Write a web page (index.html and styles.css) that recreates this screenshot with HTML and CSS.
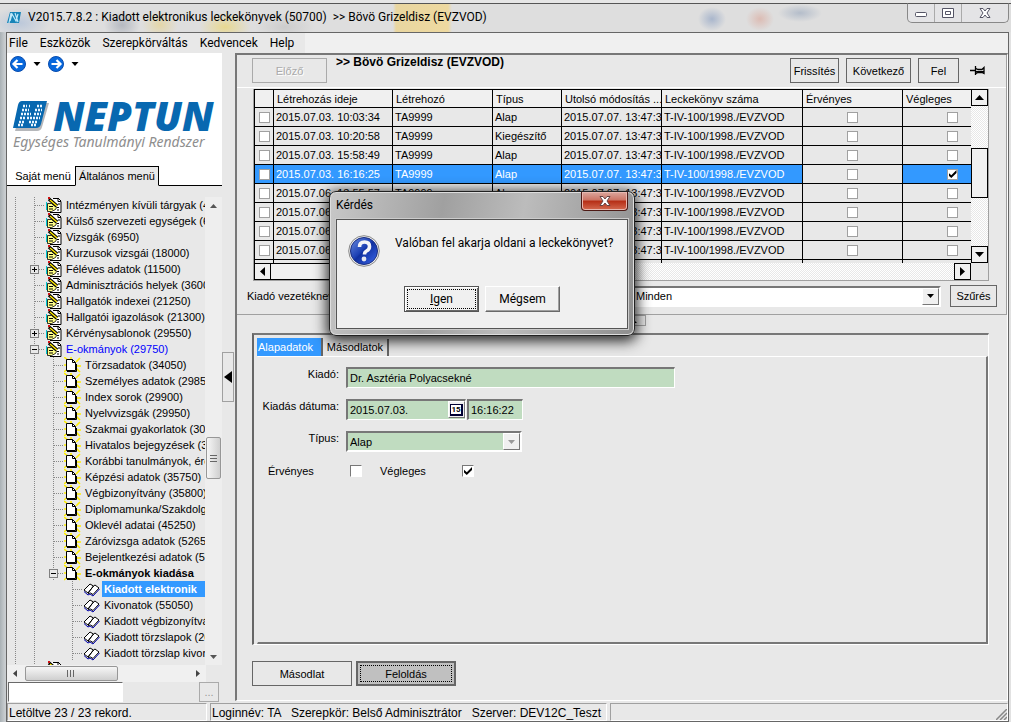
FILE: index.html
```html
<!DOCTYPE html>
<html lang="hu">
<head>
<meta charset="utf-8">
<title>Kiadott elektronikus leckekönyvek</title>
<link rel="stylesheet" href="styles.css">
</head>
<body>
<svg class="defs" aria-hidden="true">
  <symbol id="note" viewBox="0 0 17 16"><path d="M6 1h7l3 3v11H5z" fill="#fff"/><path d="M8 1.500h5v3h3v11H5M13 1l3 3" fill="none" stroke="#000"/><path d="M1.500 5v8" stroke="#00c8d0"/><path d="M2.500 6.500h4l5 4-1 2-4 2h-4z" fill="#ffff88" stroke="#000" stroke-width=".8"/><path d="M4 2l8 7" stroke="#000" stroke-width="3.500"/><path d="M5 3l7 6" stroke="#ffe800" stroke-width="1.500"/><path d="M3 0h2v2H3z" fill="#d01010"/><path d="M13 7h2M12 10.500h2M12 13h2M4 9.500h4M4 12h4" stroke="#000"/></symbol>
  <symbol id="page" viewBox="0 0 17 16"><path d="M0 0l5 4M0 8h4M0 15l5-4M16 1l-4 4M17 9h-4M16 15l-4-4M7 0v4" stroke="#ffee00" stroke-width="1.600"/><path d="M2.500 2.500h6l3 3v8h-9z" fill="#fff" stroke="#000"/><path d="M8.500 2.500v3h3M3 14.500h9.500V7" fill="none" stroke="#000"/></symbol>
  <symbol id="book" viewBox="0 0 17 16"><path d="M1 9l6-6 3 2 2-1 4 3-6 7-3-2-2 1z" fill="#fff"/><path d="M1 9l6-6 3.500 2L5 12zM5 12l5.500-7L12 4l4 3-6 6.500L7.500 12 5 12.500" fill="none" stroke="#000"/><path d="M1 10.500l4 3.500 2-1 3 2 6.500-7" fill="none" stroke="#0000a8"/></symbol>
  <symbol id="tiles" viewBox="0 0 36 30"><path d="M10 2h26l-7 24q-1 4-5 4H2z" fill="#b5b7ba"/><path d="M9 0h25l-6 23q-1 4-5 4H0L5 4q1-4 4-4z" fill="#0868b0"/><path d="M10 5h4M16 5h1M24 5h6M9 9h7M22 9h7M8 13h10M21 13h7M7 17h5M14 17h13M6 21h5M16 21h9M5 24h5M18 24h6" stroke="#e8f5ff" stroke-width="2.600" stroke-dasharray="2 1"/></symbol>
</svg>
<div class="window">
  <header class="titlebar">
    <svg class="app-icon" viewBox="0 0 14 13"><path d="M3 1h11l-2 11H0z" fill="#1684b8"/><path d="M3 10l2-7 4 7 2-7M2 12L4 2M8 2l3 9" stroke="#bfe8fa" stroke-width="1.200" fill="none"/></svg>
    <h1>V2015.7.8.2 : Kiadott elektronikus leckekönyvek (50700) &nbsp;&gt;&gt; Bövö Grizeldisz (EVZVOD)</h1>
    <div class="winbtns">
      <button aria-label="Kis méret"><svg viewBox="0 0 12 10"><rect x=".5" y="4.500" width="11" height="4" rx="1" fill="#fff" stroke="#556"/></svg></button>
      <button aria-label="Teljes méret"><svg viewBox="0 0 12 10"><path d="M.5.5h11v9H.5z" fill="#fff" stroke="#556"/><path d="M3.500 3.500h5v3h-5z" fill="#fff" stroke="#556"/></svg></button>
      <button aria-label="Bezárás"><svg viewBox="0 0 12 10"><path d="M1 .5h3l2 2.500L8 .5h3L8 5l3 4.500H8L6 7 4 9.500H1L4 5z" fill="#fff" stroke="#556"/></svg></button>
    </div>
  </header>
  <div class="client">
    <nav class="menubar"><button>File</button><button>Eszközök</button><button>Szerepkörváltás</button><button>Kedvencek</button><button>Help</button></nav>
    <div class="work">
      <aside class="sidebar">
        <div class="brand">
          <div class="history">
            <button aria-label="Vissza"><svg class="ball" viewBox="0 0 16 16"><circle cx="8" cy="8" r="7.500" fill="#0868dc" stroke="#084cae"/><path d="M12.500 8H4M7.500 4L3.500 8l4 4" fill="none" stroke="#fff" stroke-width="2.200"/></svg></button>
            <button aria-label="Vissza lista"><svg class="tri" viewBox="0 0 7 4"><path d="M0 0h7L3.500 4z"/></svg></button>
            <button aria-label="Előre"><svg class="ball" viewBox="0 0 16 16"><circle cx="8" cy="8" r="7.500" fill="#0868dc" stroke="#084cae"/><path d="M3.500 8H12M8.500 4l4 4-4 4" fill="none" stroke="#fff" stroke-width="2.200"/></svg></button>
            <button aria-label="Előre lista"><svg class="tri" viewBox="0 0 7 4"><path d="M0 0h7L3.500 4z"/></svg></button>
          </div>
          <div class="logo"><svg><use href="#tiles"/></svg><span>NEPTUN</span></div>
          <p class="slogan">Egységes Tanulmányi Rendszer</p>
          <div class="sidetabs" role="tablist"><button role="tab">Saját menü</button><button role="tab" class="on" aria-selected="true">Általános menü</button></div>
        </div>
        <div class="treebox">
          <ul class="tree">
            <li class="d1"><span class="joint"></span><svg><use href="#note"/></svg><span class="lbl">Intézményen kívüli tárgyak (4</span></li>
            <li class="d1"><span class="joint"></span><svg><use href="#note"/></svg><span class="lbl">Külső szervezeti egységek (68</span></li>
            <li class="d1"><span class="joint"></span><svg><use href="#note"/></svg><span class="lbl">Vizsgák (6950)</span></li>
            <li class="d1"><span class="joint"></span><svg><use href="#note"/></svg><span class="lbl">Kurzusok vizsgái (18000)</span></li>
            <li class="d1"><span class="joint"><button class="plus" aria-label="Kibontás"></button></span><svg><use href="#note"/></svg><span class="lbl">Féléves adatok (11500)</span></li>
            <li class="d1"><span class="joint"></span><svg><use href="#note"/></svg><span class="lbl">Adminisztrációs helyek (3600)</span></li>
            <li class="d1"><span class="joint"></span><svg><use href="#note"/></svg><span class="lbl">Hallgatók indexei (21250)</span></li>
            <li class="d1"><span class="joint"></span><svg><use href="#note"/></svg><span class="lbl">Hallgatói igazolások (21300)</span></li>
            <li class="d1"><span class="joint"><button class="plus" aria-label="Kibontás"></button></span><svg><use href="#note"/></svg><span class="lbl">Kérvénysablonok (29550)</span></li>
            <li class="d1"><span class="joint"><button aria-label="Összecsukás"></button></span><svg><use href="#note"/></svg><span class="lbl open">E-okmányok (29750)</span></li>
            <li class="d2"><span class="joint"></span><svg><use href="#page"/></svg><span class="lbl">Törzsadatok (34050)</span></li>
            <li class="d2"><span class="joint"></span><svg><use href="#page"/></svg><span class="lbl">Személyes adatok (29850</span></li>
            <li class="d2"><span class="joint"></span><svg><use href="#page"/></svg><span class="lbl">Index sorok (29900)</span></li>
            <li class="d2"><span class="joint"></span><svg><use href="#page"/></svg><span class="lbl">Nyelvvizsgák (29950)</span></li>
            <li class="d2"><span class="joint"></span><svg><use href="#page"/></svg><span class="lbl">Szakmai gyakorlatok (300</span></li>
            <li class="d2"><span class="joint"></span><svg><use href="#page"/></svg><span class="lbl">Hivatalos bejegyzések (30</span></li>
            <li class="d2"><span class="joint"></span><svg><use href="#page"/></svg><span class="lbl">Korábbi tanulmányok, éret</span></li>
            <li class="d2"><span class="joint"></span><svg><use href="#page"/></svg><span class="lbl">Képzési adatok (35750)</span></li>
            <li class="d2"><span class="joint"></span><svg><use href="#page"/></svg><span class="lbl">Végbizonyítvány (35800)</span></li>
            <li class="d2"><span class="joint"></span><svg><use href="#page"/></svg><span class="lbl">Diplomamunka/Szakdolgo</span></li>
            <li class="d2"><span class="joint"></span><svg><use href="#page"/></svg><span class="lbl">Oklevél adatai (45250)</span></li>
            <li class="d2"><span class="joint"></span><svg><use href="#page"/></svg><span class="lbl">Záróvizsga adatok (52650</span></li>
            <li class="d2"><span class="joint"></span><svg><use href="#page"/></svg><span class="lbl">Bejelentkezési adatok (57</span></li>
            <li class="d2 last"><span class="joint"><button aria-label="Összecsukás"></button></span><svg><use href="#page"/></svg><span class="lbl bold">E-okmányok kiadása</span></li>
            <li class="d3"><span class="joint"></span><svg><use href="#book"/></svg><span class="lbl sel">Kiadott elektronik</span></li>
            <li class="d3"><span class="joint"></span><svg><use href="#book"/></svg><span class="lbl">Kivonatok (55050)</span></li>
            <li class="d3"><span class="joint"></span><svg><use href="#book"/></svg><span class="lbl">Kiadott végbizonyítvá</span></li>
            <li class="d3"><span class="joint"></span><svg><use href="#book"/></svg><span class="lbl">Kiadott törzslapok (26</span></li>
            <li class="d3 last"><span class="joint"></span><svg><use href="#book"/></svg><span class="lbl">Kiadott törzslap kivon</span></li>
            <li class="d1"><span class="joint"></span><svg><use href="#note"/></svg></li>
          </ul>
          <div class="vscroll"><svg class="tri" viewBox="0 0 7 4"><path d="M0 4h7L3.500 0z" fill="#555"/></svg><span class="thumb"></span><svg class="tri" viewBox="0 0 7 4"><path d="M0 0h7L3.500 4z" fill="#555"/></svg></div>
        </div>
        <div class="hscroll"><svg viewBox="0 0 4 7"><path d="M4 0v7L0 3.500z" fill="#444"/></svg><span class="thumb"></span><svg viewBox="0 0 4 7"><path d="M0 0v7l4-3.500z" fill="#444"/></svg></div>
        <div class="search"><input type="text" aria-label="Keresés"><button>...</button></div>
      </aside>
      <div class="splitter"><button aria-label="Menü elrejtése"><svg viewBox="0 0 8 12"><path d="M8 0v12L0 6z"/></svg></button></div>
      <main class="main">
        <section class="list">
          <div class="toolbar">
            <button class="btn prev" disabled>Előző</button>
            <h2>&gt;&gt; Bövö Grizeldisz (EVZVOD)</h2>
            <button class="btn refresh">Frissítés</button>
            <button class="btn next">Következő</button>
            <button class="btn up">Fel</button>
            <button class="pin" aria-label="Rögzítés"><svg viewBox="0 0 15 9"><path d="M0 4.500h5" stroke="#000" stroke-width="1.500"/><path d="M5.500 0v9M6 2.500l2 1h4l2-2v6l-2-1H8l-2 1" fill="none" stroke="#000" stroke-width="1.300"/><path d="M6 5h8v1.500H6z"/></svg></button>
          </div>
          <div class="grid">
            <div class="view">
              <table>
                <colgroup><col class="c0"><col class="c1"><col class="c2"><col class="c3"><col class="c4"><col class="c5"><col class="c6"><col class="c7"></colgroup>
                <thead><tr><th></th><th>Létrehozás ideje</th><th>Létrehozó</th><th>Típus</th><th>Utolsó módosítás ...</th><th>Leckekönyv száma</th><th>Érvényes</th><th>Végleges</th></tr></thead>
                <tbody>
                  <tr><td><input type="checkbox" aria-label="Kijelölés"></td><td>2015.07.03. 10:03:34</td><td>TA9999</td><td>Alap</td><td>2015.07.07. 13:47:3</td><td>T-IV-100/1998./EVZVOD</td><td><input type="checkbox" aria-label="Érvényes"></td><td><input type="checkbox" aria-label="Végleges"></td></tr>
                  <tr><td><input type="checkbox" aria-label="Kijelölés"></td><td>2015.07.03. 10:20:58</td><td>TA9999</td><td>Kiegészítő</td><td>2015.07.07. 13:47:3</td><td>T-IV-100/1998./EVZVOD</td><td><input type="checkbox" aria-label="Érvényes"></td><td><input type="checkbox" aria-label="Végleges"></td></tr>
                  <tr><td><input type="checkbox" aria-label="Kijelölés"></td><td>2015.07.03. 15:58:49</td><td>TA9999</td><td>Alap</td><td>2015.07.07. 13:47:3</td><td>T-IV-100/1998./EVZVOD</td><td><input type="checkbox" aria-label="Érvényes"></td><td><input type="checkbox" aria-label="Végleges"></td></tr>
                  <tr class="cur"><td><input type="checkbox" aria-label="Kijelölés"></td><td>2015.07.03. 16:16:25</td><td>TA9999</td><td>Alap</td><td>2015.07.07. 13:47:3</td><td>T-IV-100/1998./EVZVOD</td><td><input type="checkbox" aria-label="Érvényes"></td><td><input type="checkbox" aria-label="Végleges" checked></td></tr>
                  <tr><td><input type="checkbox" aria-label="Kijelölés"></td><td>2015.07.06. 13:55:57</td><td>TA9999</td><td>Alap</td><td>2015.07.07. 13:47:3</td><td>T-IV-100/1998./EVZVOD</td><td><input type="checkbox" aria-label="Érvényes"></td><td><input type="checkbox" aria-label="Végleges"></td></tr>
                  <tr><td><input type="checkbox" aria-label="Kijelölés"></td><td>2015.07.06.</td><td></td><td></td><td>2015.07.07. 13:47:3</td><td>T-IV-100/1998./EVZVOD</td><td><input type="checkbox" aria-label="Érvényes"></td><td><input type="checkbox" aria-label="Végleges"></td></tr>
                  <tr><td><input type="checkbox" aria-label="Kijelölés"></td><td>2015.07.06.</td><td></td><td></td><td>2015.07.07. 13:47:3</td><td>T-IV-100/1998./EVZVOD</td><td><input type="checkbox" aria-label="Érvényes"></td><td><input type="checkbox" aria-label="Végleges"></td></tr>
                  <tr><td><input type="checkbox" aria-label="Kijelölés"></td><td>2015.07.06.</td><td></td><td></td><td>2015.07.07. 13:47:3</td><td>T-IV-100/1998./EVZVOD</td><td><input type="checkbox" aria-label="Érvényes"></td><td><input type="checkbox" aria-label="Végleges"></td></tr>
                  <tr><td></td><td></td><td></td><td></td><td></td><td></td><td></td><td></td></tr>
                </tbody>
              </table>
            </div>
            <div class="gv"><button aria-label="Fel"><svg viewBox="0 0 9 5"><path d="M0 5h9L4.500 0z"/></svg></button><span class="gthumb"></span><button aria-label="Le"><svg viewBox="0 0 9 5"><path d="M0 0h9L4.500 5z"/></svg></button></div>
            <div class="gh"><button aria-label="Balra"><svg viewBox="0 0 5 9"><path d="M5 0v9L0 4.500z"/></svg></button><span class="gthumb"></span><button aria-label="Jobbra"><svg viewBox="0 0 5 9"><path d="M0 0v9l5-4.500z"/></svg></button></div>
          </div>
          <div class="filter">
            <label for="who">Kiadó vezetékneve:</label>
            <div class="combo wide"><select id="who"><option>Minden</option></select><span class="drop"><svg viewBox="0 0 7 4"><path d="M0 0h7L3.500 4z"/></svg></span></div>
            <button class="btn">Szűrés</button>
          </div>
        </section>
        <div class="collapse"><button aria-label="Lista összecsukása"><svg viewBox="0 0 8 4"><path d="M0 4h8L4 0z"/></svg></button></div>
        <section class="detail">
          <div class="tabs" role="tablist"><button role="tab" class="on" aria-selected="true">Alapadatok</button><button role="tab">Másodlatok</button></div>
          <form class="form">
            <label for="issuer">Kiadó:</label><input id="issuer" class="field long" type="text" value="Dr. Asztéria Polyacsekné">
            <label for="date">Kiadás dátuma:</label>
            <div class="dates"><div class="field date"><input id="date" type="text" value="2015.07.03."><button type="button" aria-label="Naptár"><span>15</span></button></div><input class="field time" type="text" aria-label="Időpont" value="16:16:22"></div>
            <label for="type">Típus:</label>
            <div class="combo green"><select id="type"><option>Alap</option></select><span class="drop"><svg viewBox="0 0 7 4"><path d="M0 0h7L3.500 4z" fill="#999"/></svg></span></div>
            <div class="checks"><label for="valid">Érvényes</label><input id="valid" type="checkbox"><label for="final">Végleges</label><input id="final" type="checkbox" checked></div>
          </form>
        </section>
        <div class="actions"><button class="btn">Másodlat</button><button class="btn focus">Feloldás</button></div>
      </main>
    </div>
    <footer class="status"><span class="s1">Letöltve 23 / 23 rekord.</span><span class="s2">Loginnév: TA &nbsp; Szerepkör: Belső Adminisztrátor &nbsp; Szerver: DEV12C_Teszt</span><span class="s3"><svg viewBox="0 0 11 11"><path d="M0 11L11 0M4 11l7-7M8 11l3-3" stroke="#888" stroke-width="1.500"/></svg></span></footer>
  </div>
</div>
<div class="dialog" role="dialog" aria-labelledby="dt">
  <div class="dhead"><h2 id="dt">Kérdés</h2><button aria-label="Bezárás"><svg viewBox="0 0 12 10"><path d="M1 .5h3l2 2.500L8 .5h3L8 5l3 4.500H8L6 7 4 9.500H1L4 5z" fill="#fff" stroke="#644"/></svg></button></div>
  <div class="dbody">
    <div class="msg">
      <svg viewBox="0 0 32 32"><defs><linearGradient id="q" x2="1" y2="1"><stop offset="0" stop-color="#6c8de0"/><stop offset=".45" stop-color="#1c40b4"/><stop offset=".5" stop-color="#1030a0"/><stop offset="1" stop-color="#3c68ec"/></linearGradient></defs><circle cx="16" cy="16" r="15.300" fill="#eee" stroke="#888"/><circle cx="16" cy="16" r="13.500" fill="url(#q)" stroke="#1a2e80"/><path d="M11.500 12q0-5 5-5t5 4.500q0 3-3 4.500-2 1-2 3.500" fill="none" stroke="#f4f4f8" stroke-width="3.600"/><circle cx="16" cy="24" r="2.400" fill="#e4e6f0"/></svg>
      <p>Valóban fel akarja oldani a leckekönyvet?</p>
    </div>
    <div class="dbtns"><button class="default"><span><u>I</u>gen</span></button><button><span>Mégsem</span></button></div>
  </div>
</div>
</body>
</html>
```
FILE: styles.css
```css
* { box-sizing: border-box; }
body { margin: 0; font: 11px/16px "Liberation Sans", Arial, sans-serif; color: #000; background: #e8e8e8; }
button, input, select { font: inherit; color: inherit; margin: 0; padding: 0; border: 0; border-radius: 0; background: none; outline: 0; }
svg { display: block; flex: none; }
h1, h2, p, ul { margin: 0; padding: 0; font-weight: normal; }
.defs { position: absolute; width: 0; height: 0; }

.window { height: 100vh; display: flex; flex-direction: column; padding: 0 2px 0 6px; background: linear-gradient(90deg, #a9b1b5, #c9cdd0 5px, #c9cdd0 50%, #e2e2e2); }
.titlebar { height: 32px; margin: 0 -2px 0 -6px; padding: 3px 2px 0 7px; display: flex; align-items: flex-start; border-top: 3px solid #e6e6e6; box-shadow: inset 0 1px #555;
  background:
    radial-gradient(ellipse 26px 14px at 225px 24px, #e8d890, transparent),
    radial-gradient(ellipse 18px 14px at 160px 22px, #e4d6a8, transparent),
    radial-gradient(ellipse 18px 14px at 122px 22px, #b4b8c0, transparent),
    radial-gradient(ellipse 30px 16px at 20px 20px, #bcc8da, transparent),
    radial-gradient(ellipse 30px 14px at 285px 24px, #cccccc, transparent),
    linear-gradient(90deg, transparent 393px, #e9d6a0 396px, #eed9a0 448px, transparent 452px),
    radial-gradient(ellipse 14px 12px at 712px 16px, #a9b6cc, transparent),
    radial-gradient(ellipse 14px 12px at 760px 16px, #dcbcb4, transparent),
    radial-gradient(ellipse 22px 9px at 800px 10px, #b4bdca, transparent),
    #dedede; }
.app-icon { width: 14px; height: 13px; margin-top: 5px; }
.titlebar h1 { flex: 1; margin: 2px 0 0 7px; font: 12px/18px Roboto, sans-serif; white-space: nowrap; }
.winbtns { display: flex; height: 20px; margin-top: -3px; border: 1px solid #888; border-top-color: #555; border-radius: 0 0 5px 5px; background: #e4e4e6; }
.winbtns button { width: 27px; display: grid; place-items: center; border-right: 1px solid #aaa; }
.winbtns button:last-child { width: 46px; border: 0; }
.winbtns svg { width: 12px; height: 10px; }
.client { flex: 1; min-height: 0; display: flex; flex-direction: column; border: 1px solid #666; background: #e8e8e8; }

.menubar { height: 20px; display: flex; background: linear-gradient(90deg, #e8e8e8 298px, #f0f0f0 298px); }
.menubar button { padding: 0 6px; font: 12px/20px Roboto, sans-serif; }
.menubar button:first-child { padding-left: 2px; }
.work { flex: 1; min-height: 0; display: flex; }

.sidebar { width: 215px; display: flex; flex-direction: column; }
.brand { height: 133px; display: flex; flex-direction: column; background: #fff; }
.history { display: flex; align-items: center; gap: 6px; height: 22px; padding-left: 3px; }
.history .ball { width: 16px; height: 16px; }
.history .tri { width: 8px; height: 4px; margin: 0 1px; }
.logo { display: flex; align-items: center; height: 34px; margin-top: 24px; padding-left: 6px; }
.logo svg { width: 36px; height: 30px; }
.logo span { margin-left: 4px; font: italic 800 40px/34px "Open Sans", sans-serif; color: #0868b0; }
.slogan { padding-left: 6px; font: italic 14px/18px "Noto Sans", sans-serif; color: #8e8e8e; white-space: nowrap; }
.sidetabs { display: flex; align-items: flex-end; margin-top: auto; }
.sidetabs button { height: 20px; width: 68px; border-bottom: 1px solid #000; padding-left: 4px; }
.sidetabs .on { width: 84px; padding: 0; border: 1px solid #000; border-bottom-color: #e8e8e8; background: #e8e8e8; }
.sidetabs::after { content: ""; flex: 1; border-bottom: 1px solid #000; }

.treebox { flex: 1; min-height: 0; display: flex; margin-top: 11px; }
.tree { flex: 1; overflow: hidden; list-style: none; }
.tree li { display: flex; height: 16px; white-space: nowrap;
  background: linear-gradient(#888 50%, transparent 50%) 8px 0 / 1px 2px repeat-y, linear-gradient(#888 50%, transparent 50%) 27px 0 / 1px 2px repeat-y; }
.tree .d1 { padding-left: 18px; }
.tree .d2 { padding-left: 37px; }
.tree .d3 { padding-left: 56px; }
.tree svg { width: 17px; height: 16px; }
.joint { width: 20px; flex: none; display: flex; align-items: center; padding-left: 5px;
  background: linear-gradient(#888 50%, transparent 50%) 9px 0 / 1px 2px repeat-y, linear-gradient(#e8e8e8, #e8e8e8) 0 0 / 9px 16px no-repeat, repeating-linear-gradient(90deg, #888 0 1px, transparent 1px 2px) 0 8px / 20px 1px no-repeat; }
.joint button { width: 9px; height: 9px; border: 1px solid #808080; background: linear-gradient(#000, #000) center / 5px 1px no-repeat #e8e8e8; }
.joint .plus { background: linear-gradient(#000, #000) center / 5px 1px no-repeat, linear-gradient(#000, #000) center / 1px 5px no-repeat #e8e8e8; }
.lbl { padding: 0 0 0 4px; }
.open { color: #00f; }
.bold, .sel { font-weight: bold; }
.sel { flex: 1; padding-left: 2px; margin-left: 2px; background: #3399ff; color: #fff; }
.vscroll { width: 17px; display: flex; flex-direction: column; align-items: center; padding: 7px 0 6px; background: #eee; }
.vscroll .tri { width: 7px; height: 4px; }
.vscroll .thumb { width: 15px; height: 42px; margin: 229px 0 auto; border: 1px solid #979797; border-radius: 2px; background: linear-gradient(#666, #666) center 17px / 7px 1px no-repeat, linear-gradient(#666, #666) center 20px / 7px 1px no-repeat, linear-gradient(#666, #666) center 23px / 7px 1px no-repeat, linear-gradient(90deg, #f6f6f6, #cfcfcf); }
.hscroll { height: 17px; margin-right: 16px; padding: 0 6px; display: flex; align-items: center; background: #f0f0f0; }
.hscroll svg { width: 4px; height: 7px; }
.hscroll .thumb { width: 93px; height: 15px; margin: 0 auto 0 8px; border: 1px solid #979797; border-radius: 2px; background: linear-gradient(#666, #666) 41px center / 1px 7px no-repeat, linear-gradient(#666, #666) 44px center / 1px 7px no-repeat, linear-gradient(#666, #666) 47px center / 1px 7px no-repeat, linear-gradient(#f6f6f6, #cfcfcf); }
.search { display: flex; justify-content: space-between; height: 21px; padding: 0 3px 1px 1px; }
.search input { width: 115px; background: #fff; border: 1px solid #fff; border-top: 1px solid #696969; border-left-color: #696969; }
.search button { width: 20px; border: 1px solid #aaa; color: #999; }

.splitter { width: 13px; padding-top: 299px; }
.splitter button { width: 12px; height: 50px; display: grid; place-items: center; border: 1px solid #a0a0a0; }
.splitter svg { width: 8px; height: 12px; }

.main { flex: 1; min-width: 0; display: flex; flex-direction: column; margin-bottom: 2px; border: 2px solid; border-color: #777 #fff #fff #777; border-right-width: 1px; border-bottom-width: 1px; }
.list { border-bottom: 1px solid #a0a0a0; border-right: 1px solid #a0a0a0; padding-bottom: 7px; }
.toolbar { display: flex; gap: 7px; height: 33px; padding: 3px 21px 0 15px; border-bottom: 1px solid #fff; }
.btn { height: 25px; padding: 0; border: 1px solid #666; white-space: nowrap; }
.btn:disabled { color: #aaa; border-color: #aaa; text-shadow: 1px 1px #fff; }
.prev { width: 75px; }
.toolbar h2 { flex: 1; font-weight: bold; font-size: 12px; line-height: 14px; margin: -3px 0 0 2px; }
.refresh { width: 49px; }
.next { width: 65px; }
.up { width: 41px; }
.pin { margin-left: 4px; height: 25px; }
.pin svg { width: 15px; height: 9px; }

.grid { display: grid; grid-template-columns: minmax(0, 1fr) 17px; grid-template-rows: 174px 17px; margin: 1px 17px 0 16px; border: 1px solid #a0a0a0; border-top: 0; }
.view { overflow: hidden; }
table { width: 748px; table-layout: fixed; border-collapse: collapse; }
.c0 { width: 19px; } .c1 { width: 119px; } .c2 { width: 100px; } .c3 { width: 69px; } .c4 { width: 100px; } .c5 { width: 141px; } .c6 { width: 100px; } .c7 { width: 100px; }
th, td { height: 19px; padding: 0 0 0 2px; border: 1px solid #000; line-height: 16px; text-align: left; white-space: nowrap; overflow: hidden; }
th { height: 18px; padding-left: 3px; font-weight: normal; background: #f0f0f0; }
td:first-child, td:nth-child(n+7) { text-align: center; padding: 0; }
.cur td { background: #3399ff; color: #fff; }
.cur td:nth-child(7) { background: #e8e8e8; }
input[type=checkbox] { appearance: none; display: inline-grid; place-items: center; width: 11px; height: 11px; border: 1px solid #a0a0a0; background: #fff; }
td input[type=checkbox] { display: grid; margin: 0 auto; }
input[type=checkbox]:checked::before { content: ""; width: 8px; height: 8px; background: #000; clip-path: polygon(0 35%, 35% 65%, 100% 0, 100% 38%, 35% 100%, 0 70%); }
.gv, .gh { display: flex; background: repeating-conic-gradient(#fff 0 25%, #e8e8e8 0 50%) 0 0 / 2px 2px; }
.gv { flex-direction: column; }
.gv button, .gh button { width: 17px; height: 17px; display: grid; place-items: center; border: 1px solid #000; background: #f0f0f0; }
.gv svg { width: 9px; height: 5px; }
.gh svg { width: 5px; height: 9px; }
.gv .gthumb { height: 50px; margin: 42px 0 auto; border: 1px solid #000; background: #f0f0f0; }
.gh .gthumb { width: 300px; margin-right: auto; border: 1px solid #000; border-left: 0; background: #f0f0f0; }

.filter { display: flex; align-items: center; gap: 9px; margin: 4px 9px 0 10px; height: 22px; }
.filter label { width: 100px; white-space: nowrap; }
.filter .btn { width: 47px; height: 22px; }
.combo { display: grid; grid-template-columns: minmax(0, 1fr) 17px; height: 21px; background: #fff; border: 2px solid; border-color: #777 #fff #fff #777; }
.combo select { appearance: none; grid-area: 1 / 1 / 2 / 3; width: 100%; padding-left: 2px; }
.drop { grid-area: 1 / 2; display: grid; place-items: center; background: #f0f0f0; border: 1px solid; border-color: #fff #777 #777 #fff; pointer-events: none; }
.drop svg { width: 7px; height: 4px; }
.wide { flex: 1; }
.combo.wide select { padding-left: 278px; }
.green { background: #c0dcc0; width: 176px; }
.collapse { padding-left: 359px; height: 18px; }
.collapse button { width: 50px; height: 11px; display: grid; place-items: center end; padding-right: 8px; border: 1px solid #a0a0a0; }
.collapse svg { width: 8px; height: 4px; }

.detail { flex: 1; display: flex; flex-direction: column; margin: 0 18px 0 15px; padding: 3px 0 0 3px; border: 2px solid; border-color: #777 #fff #fff #666; border-right-width: 1px; border-bottom-width: 1px; }
.tabs { display: flex; align-items: flex-end; }
.tabs button { width: 66px; height: 17px; line-height: 15px; border-right: 2px solid #666; }
.tabs .on { height: 18px; background: #3399ff; color: #fff; text-align: left; padding-left: 1px; }
.form { flex: 1; display: grid; grid-template-columns: 81px 1fr; grid-auto-rows: 21px; align-content: start; gap: 11px 7px; padding: 10px 0 0; border: 2px solid; border-color: #fff #777 #777 #e8e8e8; border-left-width: 1px; border-top-width: 1px; }
.form > label { text-align: right; line-height: 14px; white-space: nowrap; }
.field { height: 21px; padding: 0 2px; background: #c0dcc0; border: 2px solid; border-color: #777 #fff #fff #777; border-right-width: 1px; border-bottom-width: 1px; }
.long { width: 329px; }
.dates { display: flex; gap: 1px; }
.date { width: 120px; display: flex; justify-content: space-between; padding-right: 0; }
.date input { width: 80px; }
.date button { width: 17px; height: 17px; display: grid; place-items: center; background: #f0f0f0; border: 1px solid; border-color: #fff #777 #777 #fff; }
.date button span { font: bold 8px/9px Roboto, sans-serif; background: #fff; border: 1px solid #003; border-width: 1px 2px 2px 1px; }
.time { width: 56px; }
.checks { grid-column: 1 / 3; height: 16px; display: flex; align-items: center; padding-left: 10px; }
.checks label { width: 82px; }
.checks input[type=checkbox] { width: 12px; height: 12px; border-color: #777 #fff #fff #777; margin-right: 18px; }
.actions { display: flex; gap: 4px; padding: 16px 0 14px 15px; }
.actions .btn { width: 100px; }
.actions .focus { border: 2px solid #666; background: #c0c0c0; outline: 1px dotted #000; outline-offset: -5px; }

.status { display: flex; gap: 3px; height: 18px; font-size: 12px; line-height: 18px; white-space: nowrap; }
.status span { border: 1px solid; border-color: #a0a0a0 #fff #fff #a0a0a0; padding-left: 1px; }
.s1 { width: 200px; }
.s2 { width: 397px; }
.s3 { flex: 1; display: flex; justify-content: flex-end; align-items: flex-end; }
.s3 svg { width: 11px; height: 11px; }

.dialog { position: absolute; left: 329px; top: 191px; width: 306px; padding: 0 6px 6px; border: 1px solid #222; border-radius: 7px; box-shadow: inset 0 0 0 1px #ddd, 0 3px 14px 2px rgba(0, 0, 0, .85); background: linear-gradient(100deg, #c8c8c8, #a0a0a0 35%, #bcbcbc 60%, #8e8e8e); }
.dhead { display: flex; justify-content: space-between; height: 27px; }
.dhead h2 { font: 12px/26px Roboto, sans-serif; }
.dhead button { width: 47px; height: 19px; display: grid; place-items: center; border: 1px solid #4d1a15; border-top: 0; border-radius: 0 0 4px 4px; background: linear-gradient(#dba79e, #cc7464 45%, #b52d15 50%, #d46a50); box-shadow: inset 0 0 0 1px #e8b8b0; }
.dhead svg { width: 12px; height: 10px; }
.dbody { border: 1px solid #555; background: #f0f0f0; padding: 15px 11px 16px; box-shadow: 0 0 0 1px #ccc; font: 12px/16px Roboto, sans-serif; }
.msg { display: flex; gap: 15px; }
.msg svg { width: 32px; height: 32px; }
.msg p { white-space: nowrap; }
.dbtns { display: flex; justify-content: center; gap: 6px; margin-top: 19px; }
.dbtns button { width: 75px; height: 26px; padding: 2px; border: 1px solid; border-color: #fff #696969 #696969 #fff; box-shadow: inset -1px -1px #a0a0a0; }
.dbtns span { display: block; line-height: 18px; border: 1px solid transparent; }
.dbtns .default { border-color: #555; box-shadow: inset 1px 1px #fff, inset -1px -1px #696969; }
.dbtns .default span { border: 1px dotted #000; }
```
